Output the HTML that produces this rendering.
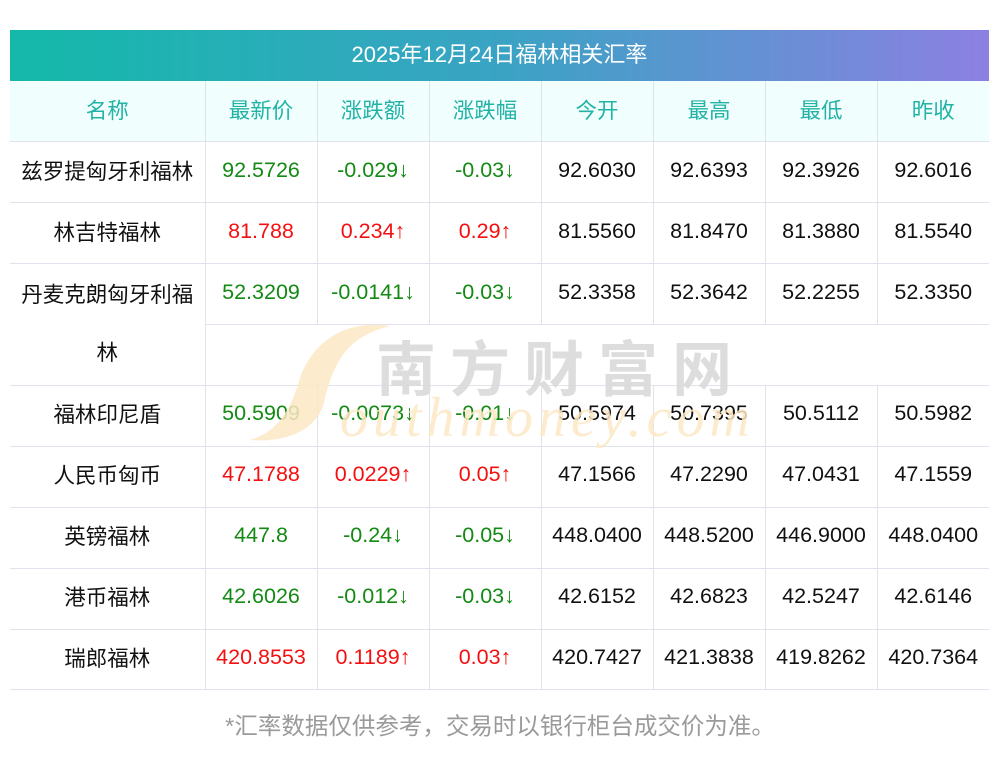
<!DOCTYPE html>
<html><head><meta charset="utf-8"><style>
*{margin:0;padding:0;box-sizing:border-box}
body{width:1000px;height:757px;background:#fff;font-family:"Liberation Sans","Noto Sans CJK SC",sans-serif;position:relative;overflow:hidden}
.title{position:absolute;left:10px;top:30px;width:979px;height:51px;background:linear-gradient(90deg,#14b9aa,#3aa3c4 50%,#8c80e2);color:#fff;font-size:22px;text-align:center;line-height:49px}
table{position:absolute;left:10px;top:81px;width:979px;border-collapse:collapse;table-layout:fixed;font-size:21.5px}
tr{height:60.9px}
td{height:60.9px;text-align:center;vertical-align:middle;border-bottom:1px solid #e2e2ec;border-left:1px solid #e2e2ec;padding:0 0 4px 0;color:#111}
td:first-child{border-left:none}
tr.h td{background:#f0fefe;color:#22b3a6}
.g{color:#138a13}.r{color:#f41010}
.foot{position:absolute;top:707px;left:0;width:1000px;text-align:center;color:#9a9a9a;font-size:23.5px}
.wm1{position:absolute;left:376px;top:322px;font-size:60px;color:#dadada;letter-spacing:14px;font-weight:bold;opacity:.9}
.wm2{position:absolute;left:340px;top:386px;font-size:56px;color:#fde8c6;font-style:italic;font-family:"Liberation Serif",serif;letter-spacing:5px;opacity:.85}
</style></head><body>
<div class="title">2025年12月24日福林相关汇率</div>
<table>
<colgroup><col style="width:195px"><col style="width:112px"><col style="width:112px"><col style="width:112px"><col style="width:112px"><col style="width:112px"><col style="width:112px"><col style="width:112px"></colgroup>
<tr class="h"><td>名称</td><td>最新价</td><td>涨跌额</td><td>涨跌幅</td><td>今开</td><td>最高</td><td>最低</td><td>昨收</td></tr>
<tr><td>兹罗提匈牙利福林</td><td class="g">92.5726</td><td class="g">-0.029↓</td><td class="g">-0.03↓</td><td>92.6030</td><td>92.6393</td><td>92.3926</td><td>92.6016</td></tr>
<tr><td>林吉特福林</td><td class="r">81.788</td><td class="r">0.234↑</td><td class="r">0.29↑</td><td>81.5560</td><td>81.8470</td><td>81.3880</td><td>81.5540</td></tr>
<tr><td rowspan="2" style="line-height:58px;padding:0 0 2px 0">丹麦克朗匈牙利福<br>林</td><td class="g">52.3209</td><td class="g">-0.0141↓</td><td class="g">-0.03↓</td><td>52.3358</td><td>52.3642</td><td>52.2255</td><td>52.3350</td></tr>
<tr><td colspan="7" style="border-left:1px solid #e2e2ec"></td></tr>
<tr><td>福林印尼盾</td><td class="g">50.5909</td><td class="g">-0.0073↓</td><td class="g">-0.01↓</td><td>50.5974</td><td>50.7395</td><td>50.5112</td><td>50.5982</td></tr>
<tr><td>人民币匈币</td><td class="r">47.1788</td><td class="r">0.0229↑</td><td class="r">0.05↑</td><td>47.1566</td><td>47.2290</td><td>47.0431</td><td>47.1559</td></tr>
<tr><td>英镑福林</td><td class="g">447.8</td><td class="g">-0.24↓</td><td class="g">-0.05↓</td><td>448.0400</td><td>448.5200</td><td>446.9000</td><td>448.0400</td></tr>
<tr><td>港币福林</td><td class="g">42.6026</td><td class="g">-0.012↓</td><td class="g">-0.03↓</td><td>42.6152</td><td>42.6823</td><td>42.5247</td><td>42.6146</td></tr>
<tr><td>瑞郎福林</td><td class="r">420.8553</td><td class="r">0.1189↑</td><td class="r">0.03↑</td><td>420.7427</td><td>421.3838</td><td>419.8262</td><td>420.7364</td></tr>
</table>
<svg style="position:absolute;left:250px;top:318px" width="160" height="130"><path d="M140 8 C90 0 60 30 50 60 C40 95 25 115 0 122 C40 125 70 110 75 80 C85 40 100 18 140 8Z" fill="#fde8c6" opacity=".85"/></svg>
<div class="wm1">南方财富网</div>
<div class="wm2">outhmoney.com</div>
<div class="foot">*汇率数据仅供参考，交易时以银行柜台成交价为准。</div>
</body></html>
